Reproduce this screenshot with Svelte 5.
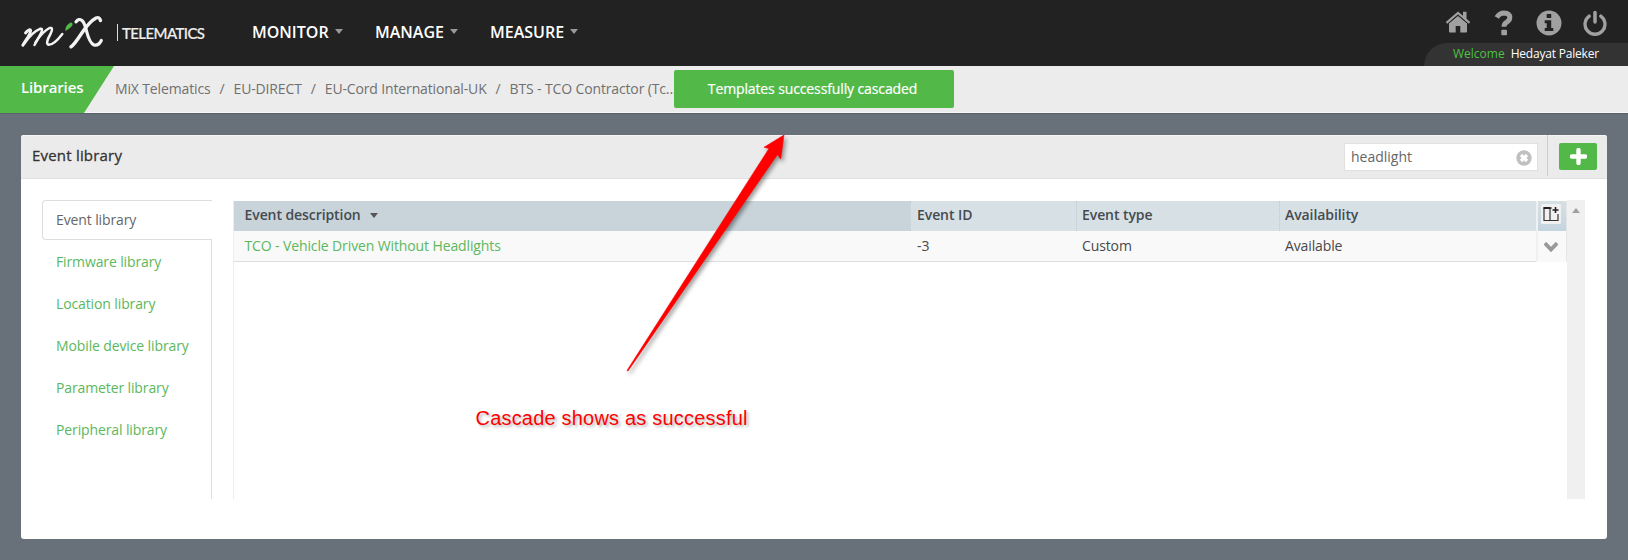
<script>
  const menu = [
    { label: 'MONITOR', width: 123 },
    { label: 'MANAGE', width: 115 },
    { label: 'MEASURE', width: 90 },
  ];
  const crumbs = ['MiX Telematics', 'EU-DIRECT', 'EU-Cord International-UK', 'BTS - TCO Contractor (Tc...'];
  const libraries = [
    'Event library',
    'Firmware library',
    'Location library',
    'Mobile device library',
    'Parameter library',
    'Peripheral library',
  ];
  let active = $state('Event library');
  let query = $state('headlight');
</script>

<div class="page">
  <header class="topbar">
    <div class="brand">
      <svg class="logo" width="86" height="38" viewBox="0 0 86 38" fill="none" stroke="#f2f3f3" stroke-linecap="round" stroke-linejoin="round">
        <path d="M5.500 20Q9 16 10.500 17Q11.500 18 8 24Q4.500 29 2.800 32.200" stroke-width="2.900" />
        <path d="M4 31Q12 19 20 15.800Q24 15 20 22L14.500 32" stroke-width="2.500" />
        <path d="M15.500 29.500Q22 19 29.500 15Q34 14 30.500 21Q25 30.500 28.500 31.800Q34 32 42.300 21" stroke-width="2.500" />
        <path d="M56 8.800Q58.500 5 62 7.500Q64.500 9.500 66.500 18Q69.500 30 74 32Q78.500 33 81.300 27.500" stroke-width="3.200" />
        <path d="M80.500 7.500Q79.500 3.500 76 5Q69.500 8.500 61.500 20.500Q54 32 51 33.800" stroke-width="3.400" />
        <path d="M45.300 18Q44.800 12.500 50.500 9.500Q53.700 9.600 52 13Q49 16.500 45.300 18Z" fill="#52b848" stroke="none" />
      </svg>
      <span class="telematics">TELEMATICS</span>
    </div>
    <nav class="menu">
      {#each menu as item}
        <span class="menu-item" style:width="{item.width}px">{item.label}<i class="caret"></i></span>
      {/each}
    </nav>
    <div class="account">
      <div class="tools">
        <svg width="26" height="24" viewBox="0 0 26 24" fill="#a0a0a0">
          <path d="M13 5.500L22 13V21.500Q22 22.500 21 22.500H15.300V16H10.700V22.500H5Q4 22.500 4 21.500V13Z" />
          <path d="M1.500 12.800L13 3L24.500 12.800" fill="none" stroke="#a0a0a0" stroke-width="2.200" />
          <path d="M18 1.800H21.500V9.500L18 6.500Z" />
          <path d="M3 13.800L13 5.500L23 13.800" fill="none" stroke="#222" stroke-width=".9" />
        </svg>
        <svg width="20" height="26" viewBox="0 0 20 26">
          <path d="M2.800 7.500Q5.500 3 10 3Q15.800 3.200 15.800 7.600Q15.800 10.200 12.800 12.200Q10 13.800 10 16.800" fill="none" stroke="#a0a0a0" stroke-width="5" />
          <rect x="7.300" y="19.800" width="5.700" height="5.400" rx="1" fill="#a0a0a0" />
        </svg>
        <svg width="26" height="26" viewBox="0 0 26 26">
          <circle cx="13" cy="13" r="12.500" fill="#a0a0a0" />
          <path d="M10.700 4H15.200V8H10.700ZM8.700 10.200H15.200V18H17.300V21H8.700V18H10.700V13.200H8.700Z" fill="#222" />
        </svg>
        <svg width="24" height="26" viewBox="0 0 24 26" fill="none" stroke="#a0a0a0" stroke-linecap="round">
          <path d="M6.200 6.100A10 10 0 1 0 17.800 6.100" stroke-width="3.300" />
          <path d="M12 2.500V12" stroke-width="3.500" />
        </svg>
      </div>
      <div class="welcome"><span class="hello">Welcome</span><span class="user">Hedayat Paleker</span></div>
    </div>
  </header>

  <div class="crumbbar">
    <div class="section"><span>Libraries</span></div>
    <div class="crumbs">
      {#each crumbs as crumb, i}
        {#if i > 0}<span class="slash">/</span>{/if}
        <span>{crumb}</span>
      {/each}
    </div>
  </div>

  <main class="panel">
    <div class="panel-head">
      <h1>Event library</h1>
      <div class="search">
        <input bind:value={query} aria-label="Search" />
        <svg width="16" height="16" viewBox="0 0 16 16">
          <circle cx="8" cy="8" r="7.700" fill="#c0c0c0" />
          <path d="M5 5L11 11M11 5L5 11" stroke="#fff" stroke-width="3.200" />
        </svg>
      </div>
      <div class="add-wrap">
        <button class="add" aria-label="Add">
          <svg width="17" height="17" viewBox="0 0 17 17"><path d="M8.500 2V15M2 8.500H15" stroke="#fff" stroke-width="4.400" stroke-linecap="round" /></svg>
        </button>
      </div>
    </div>
    <div class="panel-body">
      <div class="tabs">
        {#each libraries as name}
          <button class="tab" class:active={active === name} onclick={() => (active = name)}>{name}</button>
        {/each}
        <div class="tab-fill"></div>
      </div>
      <div class="grid">
        <div class="cells head">
          <div class="sorted">Event description<i class="caret dark"></i></div>
          <div>Event ID</div>
          <div>Event type</div>
          <div>Availability</div>
          <div class="tool">
            <svg width="20" height="20" viewBox="0 0 20 20">
              <rect width="20" height="20" rx="1.500" fill="#f1f1f1" />
              <path d="M3 17V4H11M9 4.500V16.500M2.500 16.500H17V10" fill="none" stroke="#333" stroke-width="1.200" />
              <path d="M2.500 4H9.500" stroke="#222" stroke-width="2" />
              <path d="M14.500 3V9M11.500 6H17.500" stroke="#222" stroke-width="1.600" />
            </svg>
          </div>
        </div>
        <div class="cells row">
          <div class="link">TCO - Vehicle Driven Without Headlights</div>
          <div>-3</div>
          <div>Custom</div>
          <div>Available</div>
          <div class="tool">
            <svg width="14" height="11" viewBox="0 0 14 11"><path d="M2.200 2.500L7 7.500L11.800 2.500" fill="none" stroke="#999" stroke-width="3.800" stroke-linecap="square" /></svg>
          </div>
        </div>
      </div>
      <div class="scrollbar"><i></i></div>
    </div>
  </main>

  <div class="toast">Templates successfully cascaded</div>

  <svg class="arrow" width="180" height="260" viewBox="615 125 180 260">
    <path d="M784 135L780.700 159L777.500 154.500L628 371L627 370.500L769 148.500L764 147.300Z" fill="#f00" stroke="#f00" stroke-width=".6" />
  </svg>
  <div class="note">Cascade shows as successful</div>
</div>

<style>
  :global(body) { background: #68707a; }
  .page { position: relative; width: 1628px; height: 560px; overflow: hidden; background: #68707a; font: 14px/20px 'Open Sans', sans-serif; letter-spacing: -.12px; color: #484848; box-sizing: border-box; }
  .page :is(div, button, input, nav, header, main) { box-sizing: border-box; }

  .topbar { display: flex; height: 66px; background: #222; }
  .brand { display: flex; width: 252px; padding: 13px 0 0 20px; }
  .logo { flex: none; }
  .telematics { height: 17px; margin: 11px 0 0 11px; padding-left: 4px; border-left: 1px solid #ddd; color: #eee; font: 500 15px/18px Lato, 'Open Sans', sans-serif; letter-spacing: -.6px; -webkit-text-stroke: .2px #eee; }
  .menu { display: flex; flex: 1; padding-top: 20px; }
  .menu-item { display: flex; align-items: center; height: 24px; color: #fff; font-size: 16px; font-weight: 600; line-height: 24px; letter-spacing: 0; }
  .caret { width: 0; height: 0; margin: 0 0 2px 6px; border: 4px solid transparent; border-top: 5px solid #999; border-bottom: 0; }
  .caret.dark { margin: 0 0 0 9px; border-top-color: #555; }

  .account { display: flex; flex-direction: column; width: 204px; }
  .tools { display: flex; gap: 22px; height: 43px; padding: 10px 0 0 21px; align-items: flex-start; }
  .tools svg:nth-child(n + 2) { position: relative; left: 1px; }
  .tools svg:last-child { left: 0; }
  .welcome { display: flex; gap: 6px; height: 23px; padding: 0 0 0 29px; border-radius: 23px 0 0 0; background: #333; color: #fff; font-size: 12px; line-height: 21px; }
  .hello { color: #4cc142; letter-spacing: 0; }
  .user { letter-spacing: -.2px; }

  .crumbbar { display: flex; height: 48px; border-bottom: 1px solid #59626c; background: #ececec; box-shadow: inset 0 -1px #f8f8f8; }
  .section { width: 115px; height: 47px; padding: 11px 0 0 21px; background: #52b848; color: #fff; font-size: 15px; font-weight: 600; clip-path: polygon(0 0, 114px 0, 84px 100%, 0 100%); }
  .crumbs { display: flex; padding: 13px 0 0; color: #707070; white-space: pre; letter-spacing: -.14px; }
  .slash { width: 23px; text-align: center; }

  .panel { width: 1586px; height: 404px; margin: 21px 0 0 21px; border-radius: 3px; background: #fff; overflow: hidden; }
  .panel-head { display: flex; height: 44px; border-bottom: 1px solid #e0e0e0; background: #ebebeb; box-shadow: inset 0 1px #f5f5f5; }
  h1 { flex: 1; margin: 0; padding: 10px 0 0 11px; color: #333; font-size: 15px; font-weight: 500; line-height: 20px; letter-spacing: .2px; -webkit-text-stroke: .3px #333; }
  .search { display: flex; align-items: center; width: 194px; height: 28px; margin: 8px 9px 0 0; padding-right: 5px; border: 1px solid #e0e0e0; background: #fff; }
  .search input { flex: 1; width: 0; padding: 0 0 1px 6px; border: 0; background: none; color: #666; font: 14px/20px 'Open Sans', sans-serif; outline: 0; }
  .search svg { margin-top: 2px; }
  .add-wrap { height: 41px; padding: 8px 10px 0 11px; border-left: 1px solid #ccc; }
  .add { display: grid; place-items: center; width: 38px; height: 27px; padding: 0; border: 0; border-radius: 2px; background: #52b848; }

  .panel-body { display: flex; height: 320px; padding: 21px 22px 0 21px; }
  .tabs { display: flex; flex-direction: column; width: 170px; height: 299px; }
  .tab { flex: none; width: 170px; height: 42px; padding: 1px 0 0 14px; border: 0; border-right: 1px solid #ddd; background: none; color: #5cb85c; font: 14px/20px 'Open Sans', sans-serif; letter-spacing: -.12px; text-align: left; }
  .tab.active { height: 40px; padding: 0 0 0 13px; border: 1px solid #ddd; border-right: 0; border-radius: 4px 0 0 4px; color: #666; }
  .tab-fill { flex: 1; border-right: 1px solid #ddd; }
  .grid { width: 1334px; height: 299px; margin-left: 21px; border-left: 1px solid #eee; }
  .cells { display: grid; grid-template-columns: 676px 166px 203px 257px 31px; }
  .cells > div { display: flex; align-items: center; padding-left: 7px; }
  .cells > div:nth-child(n + 3) { padding-left: 6px; }
  .cells > div:first-child { padding-left: 10.5px; }
  .head { height: 31px; padding-top: 1px; }
  .head > div { padding-bottom: 2px; background: #d6e0e5; color: #454b50; font-weight: 600; letter-spacing: -.08px; border-left: 1px dotted #bccbd3; }
  .cells.head > div:nth-child(2) { padding-left: 6px; }
  .cells.head > div:nth-child(n + 3) { padding-left: 5px; }
  .head > div.sorted { border: 0; background: #c8d4da; }
  .cells > div.tool:last-child { justify-content: center; padding: 0 2px 0 0; border-left: 2px solid #f0f0f0; border-right: 1px solid #e5e5e5; }
  .head > div.tool { background: linear-gradient(#d6e0e5, #c3d5df); align-items: flex-start; }
  .head .tool svg { margin-top: 3px; }
  .row { height: 31px; }
  .row > div { border-bottom: 1px solid #ddd; background: #f9f9f9; }
  .row > div.tool { border-bottom-color: #fafafa; }
  .row .tool svg { margin-top: 2px; }
  .row .link { color: #5cb85c; }
  .scrollbar { width: 18px; height: 299px; background: #f0f0f0; }
  .scrollbar i { display: block; width: 0; margin: 8px auto 0; border: 4px solid transparent; border-top: 0; border-bottom: 5px solid #a0a0a0; }

  .toast { position: absolute; left: 674px; top: 70px; width: 280px; height: 38px; padding-right: 3px; border-radius: 2px; background: #52b848; color: #fff; font-weight: 500; line-height: 38px; text-align: center; -webkit-text-stroke: .2px #fff; }
  .arrow { position: absolute; left: 615px; top: 125px; filter: drop-shadow(2px 3px 2px rgba(0, 0, 0, .4)); pointer-events: none; }
  .note { position: absolute; left: 475.500px; top: 406px; color: #f00; font: 20px/24px 'Liberation Sans', Arial, sans-serif; letter-spacing: .2px; white-space: nowrap; text-shadow: 2px 2px 3px rgba(0, 0, 0, .3); }
</style>
